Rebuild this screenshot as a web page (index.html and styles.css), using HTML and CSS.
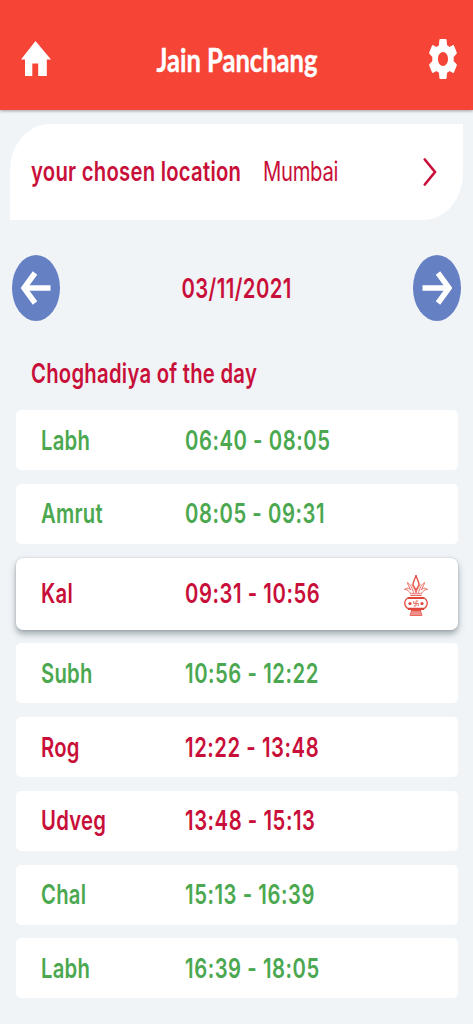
FILE: index.html
```html
<!DOCTYPE html>
<html lang="en">
<head>
    <meta charset="UTF-8">
    <meta name="viewport" content="width=device-width, initial-scale=1.0">
    <title>Jain Panchang</title>
    <link rel="stylesheet" href="styles.css">
</head>
<body>

    <header class="header">
        <svg class="home-icon" viewBox="0 0 30 35" preserveAspectRatio="none">
            <path d="M14.5 0L30 18.5H25.8V35H17.2V22.5H11.3V35H4V18.5H0Z"/>
        </svg>
        <h1 class="title"><span>Jain Panchang</span></h1>
        <svg class="settings-icon" viewBox="2.2 2 19.6 20" preserveAspectRatio="none">
            <path d="M19.43 12.98c.04-.32.07-.64.07-.98s-.03-.66-.07-.98l2.11-1.65c.19-.15.24-.42.12-.64l-2-3.46c-.12-.22-.39-.3-.61-.22l-2.49 1c-.52-.4-1.08-.73-1.69-.98l-.38-2.65C14.46 2.18 14.25 2 14 2h-4c-.25 0-.46.18-.49.42l-.38 2.65c-.61.25-1.17.59-1.69.98l-2.49-1c-.23-.09-.49 0-.61.22l-2 3.46c-.13.22-.07.49.12.64l2.11 1.65c-.04.32-.07.65-.07.98s.03.66.07.98l-2.11 1.65c-.19.15-.24.42-.12.64l2 3.46c.12.22.39.3.61.22l2.49-1c.52.4 1.08.73 1.69.98l.38 2.65c.03.24.24.42.49.42h4c.25 0 .46-.18.49-.42l.38-2.65c.61-.25 1.17-.59 1.69-.98l2.49 1c.23.09.49 0 .61-.22l2-3.46c.12-.22.07-.49-.12-.64l-2.11-1.65zM12 15.5c-1.93 0-3.5-1.57-3.5-3.5s1.57-3.5 3.5-3.5 3.5 1.57 3.5 3.5-1.57 3.5-3.5 3.5z"/>
        </svg>
    </header>

    <section class="location">
        <span class="location-label">your chosen location</span>
        <span class="location-city">Mumbai</span>
        <svg class="chevron" viewBox="0 0 14 28">
            <path d="M1.8 1.5L12 14L1.8 26.5"/>
        </svg>
    </section>

    <!-- Previous / next day -->
    <nav class="date-nav">
        <button class="arrow-btn" aria-label="Previous day">
            <svg viewBox="0 0 30 34"><path d="M29.5 17H3M14 2L3 17L14 32"/></svg>
        </button>
        <span class="date">03/11/2021</span>
        <button class="arrow-btn" aria-label="Next day">
            <svg viewBox="0 0 30 34"><path d="M0.5 17H27M16 2L27 17L16 32"/></svg>
        </button>
    </nav>

    <h2 class="heading"><span>Choghadiya of the day</span></h2>

    <ul class="list">
        <li class="row good"><span class="name">Labh</span><span class="time">06:40 - 08:05</span></li>
        <li class="row good"><span class="name">Amrut</span><span class="time">08:05 - 09:31</span></li>
        <li class="row bad current">
            <span class="name">Kal</span><span class="time">09:31 - 10:56</span>
            <svg class="kalash" viewBox="0 0 24 42">
                <!-- coconut and leaves -->
                <path class="tip" d="M12 1C11.5 5 8.5 8 9 11L12 16L15 11C15.5 8 12.5 5 12 1Z"/>
                <path d="M9.5 19C9 15 6 10 3.5 8.5C4 12 6 14 7 16C5 14 2.500 13.500 0.500 15.500C4 15.500 5 17.500 6.500 19M14.500 19C15 15 18 10 20.500 8.500C20 12 18 14 17 16C19 14 21.500 13.500 23.500 15.500C20 15.500 19 17.500 17.500 19M12 19C11 15 9 12 7.500 10.500M12 19C13 15 15 12 16.500 10.500"/>
                <!-- pot -->
                <path d="M6 19.800H18M6.500 21.500H17.500"/>
                <path class="band" d="M4 24H20M4 34.800H20M7 37H17"/>
                <path class="tip" d="M4.500 23.500C-0.500 26.500 -0.500 32 4.500 35M19.500 23.500C24.500 26.500 24.500 32 19.500 35"/>
                <path class="base" d="M7.500 37L6 41.500H18L16.500 37Z"/>
                <path d="M12 27V32M9.700 29.500H14.300M12 27H14.300M14.300 29.500V32M12 32H9.700M9.700 29.500V27"/>
                <circle cx="6" cy="29.500" r="1.600"/>
                <circle cx="18" cy="29.500" r="1.600"/>
            </svg>
        </li>
        <li class="row good"><span class="name">Subh</span><span class="time">10:56 - 12:22</span></li>
        <li class="row bad"><span class="name">Rog</span><span class="time">12:22 - 13:48</span></li>
        <li class="row bad"><span class="name">Udveg</span><span class="time">13:48 - 15:13</span></li>
        <li class="row good"><span class="name">Chal</span><span class="time">15:13 - 16:39</span></li>
        <li class="row good"><span class="name">Labh</span><span class="time">16:39 - 18:05</span></li>
    </ul>

</body>
</html>
```
FILE: styles.css
```css
/* General styles */
* {
    box-sizing: border-box;
}

body {
    margin: 0;
    height: 1024px;
    overflow: hidden;
    font-family: Inter, "Liberation Sans", sans-serif;
    font-size: 27px;
    font-weight: 600;
    letter-spacing: 0.35px;
    background: #f0f4f7;
    color: #c80f39;
}

/* Header */
.header {
    display: grid;
    grid-template-columns: 30px 1fr 28px;
    align-items: center;
    height: 110px;
    padding: 7px 16px 0 21px;
    background: #f64437;
    box-shadow: 0 1px 3px rgba(0, 0, 0, 0.35);
}

.header svg {
    fill: #fff;
}

.home-icon {
    width: 30px;
    height: 35px;
}

.settings-icon {
    width: 28px;
    height: 40px;
}

.title {
    display: flex;
    justify-content: center;
    margin: 0;
    padding: 1px 6px 0 0;
    font-family: Lato, sans-serif;
    font-size: 33px;
    font-weight: 700;
    letter-spacing: 0;
    color: #fff;
    white-space: nowrap;
}

.title span {
    transform: scaleX(0.775);
    -webkit-text-stroke: 0.4px #fff;
}

/* Location card */
.location {
    display: grid;
    grid-template-columns: 232px 1fr 14px;
    align-items: center;
    height: 96px;
    margin: 13.5px 10px 0;
    padding: 0 26px 0 21px;
    background: #fff;
    border-radius: 40px 0 40px 0 / 46px 0 46px 0;
    white-space: nowrap;
}

.location-label,
.location-city,
.name,
.time,
.heading span {
    transform: scaleX(0.75);
    transform-origin: left;
}

.location-city {
    font-weight: 400;
    letter-spacing: -0.4px;
}

.chevron {
    width: 14px;
    height: 28px;
    fill: none;
    stroke: #c80f39;
    stroke-width: 2.6;
    stroke-linecap: round;
}

/* Date navigation */
.date-nav {
    display: flex;
    justify-content: space-between;
    align-items: center;
    margin-top: 35.5px;
    padding: 0 11.5px;
}

.arrow-btn {
    display: flex;
    justify-content: center;
    align-items: center;
    width: 48px;
    height: 66px;
    padding: 0;
    border: none;
    border-radius: 50%;
    background: #6680c4;
}

.arrow-btn svg {
    width: 30px;
    height: 34px;
    fill: none;
    stroke: #fff;
    stroke-width: 5.5;
}

.date {
    transform: scaleX(0.75);
    letter-spacing: 0.6px;
}

/* Choghadiya list */
.heading {
    margin: 34.5px 0 0 31px;
    font-size: 27px;
    font-weight: 600;
    line-height: 36px;
    white-space: nowrap;
}

.heading span {
    display: inline-block;
}

.list {
    display: flex;
    flex-direction: column;
    gap: 13.6px;
    margin: 18.5px 15.5px 0;
    padding: 0;
    list-style: none;
}

.row {
    display: grid;
    grid-template-columns: 144px 1fr 24px;
    align-items: center;
    height: 60.2px;
    padding: 0 30px 0 25px;
    border-radius: 5px;
    background: #fff;
    white-space: nowrap;
}

.time {
    letter-spacing: 0.75px;
}

.good {
    color: #4ba850;
}

.bad {
    color: #c80f39;
}

.current {
    height: 72px;
    border-radius: 7px;
    box-shadow: 0 4px 6px rgba(80, 95, 105, 0.5), 0 0 2px rgba(80, 95, 105, 0.3);
}

.kalash {
    width: 24px;
    height: 42px;
    margin-top: 3px;
    fill: none;
    stroke: #ea6a60;
    stroke-width: 1;
}

.kalash circle {
    fill: #e2463a;
    stroke: none;
}

.kalash .tip {
    stroke: #e2463a;
    stroke-width: 1.3;
}

.kalash .band {
    stroke: #e2463a;
    stroke-width: 2.2;
}

.kalash .base {
    fill: #f0908a;
}
```
